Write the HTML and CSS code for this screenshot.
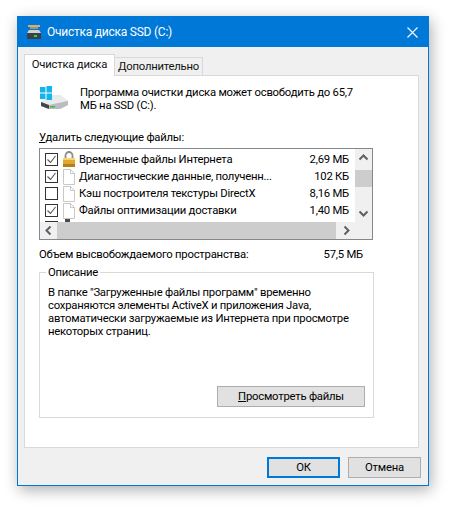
FILE: index.html
```html
<!DOCTYPE html>
<html lang="ru">
<head>
<meta charset="utf-8">
<title>Очистка диска SSD (C:)</title>
<link rel="stylesheet" href="styles.css">
</head>
<body>
<div class="window">
  <div class="titlebar">
    <svg class="title-icon" width="16" height="16" viewBox="0 0 16 16">
      <rect x="2" y="1" width="12" height="2" fill="#c9b27c"/>
      <rect x="4" y="3" width="8" height="2" fill="#a8935f"/>
      <path d="M3 6h10l2 3H1z" fill="#cfd3d6"/>
      <rect x="1" y="9" width="14" height="6" fill="#3b4148"/>
      <rect x="8" y="11" width="3" height="2" fill="#35d04a"/>
    </svg>
    <span class="title-text">Очистка диска SSD (C:)</span>
    <svg class="close" width="11" height="11" viewBox="0 0 11 11"><path d="M0.5 0.5l10 10M10.5 0.5l-10 10" stroke="#fff" stroke-width="1.1" fill="none"/></svg>
  </div>
  <div class="body">
    <div class="tabs">
      <div class="tab active">Очистка диска</div>
      <div class="tab">Дополнительно</div>
    </div>
    <div class="panel">
      <div class="intro">
        <svg class="drive" width="30" height="24" viewBox="0 0 30 24">
          <path d="M1 16L13 9h7l8 6v4l-8 4H8l-7-3z" fill="#d9dcdf"/>
          <path d="M1 16l8 3 19-4-8-6h-7z" fill="#e9ebec"/>
          <path d="M1 16l8 3v4l-8-3z" fill="#3f454b"/>
          <path d="M9 19l19-4v4l-8 4H9z" fill="#b9bdc1"/>
          <rect x="10" y="20" width="5" height="1.5" fill="#3fb54a"/>
          <rect x="0" y="1" width="5.5" height="5.5" fill="#14b4ec"/>
          <rect x="6.5" y="0" width="5.5" height="6.5" fill="#14b4ec"/>
          <rect x="0" y="7.5" width="5.5" height="5.5" fill="#14b4ec"/>
          <rect x="6.5" y="7.5" width="5.5" height="6.5" fill="#14b4ec"/>
        </svg>
        <p class="intro-text">Программа очистки диска может освободить до 65,7<br>МБ на SSD (C:).</p>
      </div>
      <div class="list-label"><u>У</u>далить следующие файлы:</div>
      <div class="listbox">
        <div class="list-top">
          <div class="rows">
            <div class="row">
              <span class="check on"><svg width="11" height="11" viewBox="0 0 11 11"><path d="M1.5 5.5l3 3 5-6.5" stroke="#555" stroke-width="1.1" fill="none"/></svg></span>
              <svg class="file" width="14" height="17" viewBox="0 0 14 17">
                <path d="M3.5 7V4.5a3.5 3.5 0 0 1 7 0V7" stroke="#8d8a80" stroke-width="1.8" fill="none"/>
                <rect x="1" y="7" width="12" height="9" fill="#e0a82e"/>
                <rect x="1" y="7" width="12" height="2" fill="#f5d475"/>
                <rect x="1" y="13" width="12" height="3" fill="#b97f17"/>
              </svg>
              <span class="name">Временные файлы Интернета</span><span class="size">2,69 МБ</span>
            </div>
            <div class="row">
              <span class="check on"><svg width="11" height="11" viewBox="0 0 11 11"><path d="M1.5 5.5l3 3 5-6.5" stroke="#555" stroke-width="1.1" fill="none"/></svg></span>
              <svg class="file" width="14" height="17" viewBox="0 0 14 17"><path d="M1.5 1.5h7l4 4v11h-11z M8.5 1.5v4h4" fill="#fff" stroke="#c9c9c9"/></svg>
              <span class="name">Диагностические данные, полученн...</span><span class="size">102 КБ</span>
            </div>
            <div class="row">
              <span class="check"></span>
              <svg class="file" width="14" height="17" viewBox="0 0 14 17"><path d="M1.5 1.5h7l4 4v11h-11z M8.5 1.5v4h4" fill="#fff" stroke="#c9c9c9"/></svg>
              <span class="name">Кэш построителя текстуры DirectX</span><span class="size">8,16 МБ</span>
            </div>
            <div class="row">
              <span class="check on"><svg width="11" height="11" viewBox="0 0 11 11"><path d="M1.5 5.5l3 3 5-6.5" stroke="#555" stroke-width="1.1" fill="none"/></svg></span>
              <svg class="file" width="14" height="17" viewBox="0 0 14 17"><path d="M1.5 1.5h7l4 4v11h-11z M8.5 1.5v4h4" fill="#fff" stroke="#c9c9c9"/></svg>
              <span class="name">Файлы оптимизации доставки</span><span class="size">1,40 МБ</span>
            </div>
            <div class="row">
              <span class="check"></span>
              <svg class="file" width="14" height="17" viewBox="0 0 14 17"><rect x="3" y="0" width="5" height="4" fill="#4a4a4a"/></svg>
            </div>
          </div>
          <div class="vscroll">
            <svg class="arrow" width="17" height="17" viewBox="0 0 17 17"><path d="M4.5 10.5l4-4 4 4" stroke="#606060" stroke-width="2" fill="none"/></svg>
            <div class="vtrack"><div class="vthumb"></div></div>
            <svg class="arrow" width="17" height="17" viewBox="0 0 17 17"><path d="M4.5 6.5l4 4 4-4" stroke="#606060" stroke-width="2" fill="none"/></svg>
          </div>
        </div>
        <div class="hscroll">
          <svg class="arrow" width="17" height="17" viewBox="0 0 17 17"><path d="M10.5 4.5l-4 4 4 4" stroke="#606060" stroke-width="2" fill="none"/></svg>
          <div class="hthumb"></div>
          <svg class="arrow" width="17" height="17" viewBox="0 0 17 17"><path d="M6.5 4.5l4 4-4 4" stroke="#606060" stroke-width="2" fill="none"/></svg>
          <div class="corner"></div>
        </div>
      </div>
      <div class="space"><span>Объем высвобождаемого пространства:</span><span>57,5 МБ</span></div>
      <fieldset class="desc">
        <legend>Описание</legend>
        <p>В папке "Загруженные файлы программ" временно<br>сохраняются элементы ActiveX и приложения Java,<br>автоматически загружаемые из Интернета при просмотре<br>некоторых страниц.</p>
        <div class="desc-actions"><button class="btn view"><u>П</u>росмотреть файлы</button></div>
      </fieldset>
    </div>
    <div class="footer">
      <button class="btn ok">ОК</button>
      <button class="btn cancel">Отмена</button>
    </div>
  </div>
</div>
</body>
</html>
```
FILE: styles.css
```css
* { box-sizing: border-box; }
html, body { margin: 0; padding: 0; background: #fff; }
body {
  width: 450px;
  height: 508px;
  overflow: hidden;
  font-family: Roboto, "Noto Sans", sans-serif;
  font-size: 11.3px;
  letter-spacing: -0.23px;
  line-height: 13px;
  color: #000;
}
.window {
  margin: 16px 0 0 17px;
  width: 412px;
  height: 470px;
  border: 1px solid #0078d7;
  background: #f0f0f0;
  display: flex;
  flex-direction: column;
  box-shadow: 2px 4px 14px rgba(0,0,0,0.32);
}
.titlebar {
  height: 30px;
  flex: none;
  background: #0078d7;
  color: #fff;
  display: flex;
  align-items: center;
  padding: 0 10px 0 8px;
}
.title-icon { margin-right: 5px; flex: none; }
.title-text { flex: 1; font-size: 12px; letter-spacing: -0.24px; }
.body { flex: 1; display: flex; flex-direction: column; padding: 7px 9px 0 6px; }
.tabs { display: flex; align-items: flex-end; height: 21px; position: relative; z-index: 1; }
.tab {
  height: 18px;
  width: 88px;
  border: 1px solid #d9d9d9;
  border-bottom: none;
  border-left: none;
  background: #f0f0f0;
  text-align: center;
  line-height: 18px;
  color: #111;
}
.tab.active {
  height: 22px;
  width: 91px;
  margin-bottom: -1px;
  background: #fff;
  border-left: 1px solid #d9d9d9;
  line-height: 20px;
}
.panel {
  width: 395px;
  height: 373px;
  background: #fff;
  border: 1px solid #d9d9d9;
  padding: 10px 14px 0 14px;
}
.intro { display: flex; height: 34px; margin-bottom: 11px; margin-left: 1px; }
.drive { flex: none; margin-right: 10px; }
.intro-text { margin: 0; padding-top: 1px; line-height: 12.5px; }
.list-label { height: 13px; margin-bottom: 4px; }
.listbox {
  width: 334px;
  height: 92px;
  border: 1px solid #828790;
  background: #fff;
  display: flex;
  flex-direction: column;
}
.list-top { display: flex; height: 73px; overflow: hidden; }
.rows { flex: 1; padding: 2px 0 0 5px; overflow: hidden; }
.row { display: flex; align-items: center; height: 17px; }
.check {
  flex: none;
  width: 13px;
  height: 13px;
  border: 1px solid #333;
  background: #fff;
  display: flex;
  align-items: center;
  justify-content: center;
  margin-right: 4px;
}
.file { flex: none; margin-right: 3px; }
.name { flex: 1; white-space: nowrap; }
.size { flex: none; margin-right: 6px; }
.vscroll { flex: none; width: 17px; background: #f0f0f0; display: flex; flex-direction: column; }
.vtrack { flex: 1; padding-top: 4px; }
.vthumb { height: 17px; background: #cdcdcd; }
.arrow { flex: none; display: block; }
.hscroll { flex: none; height: 17px; background: #f0f0f0; display: flex; }
.hthumb { width: 279px; background: #cdcdcd; }
.hscroll .arrow:nth-of-type(2) { margin-left: 2px; }
.corner { flex: 1; }
.space {
  display: flex;
  justify-content: space-between;
  width: 324px;
  margin-top: 8px;
  height: 13px;
}
.desc {
  margin: 5px 0 0 0;
  padding: 0 8px 10px;
  width: 335px;
  height: 152px;
  border: 1px solid #d9d9d9;
  display: flex;
  flex-direction: column;
}
.desc legend { padding: 0 2px; margin-left: -2px; line-height: 13px; }
.desc p { margin: 7px 0 0; line-height: 13px; }
.desc-actions { display: flex; justify-content: flex-end; margin-top: auto; }
.btn {
  font: inherit;
  letter-spacing: inherit;
  color: #000;
  background: #e1e1e1;
  border: 1px solid #adadad;
  padding: 0;
  height: 21px;
  line-height: 18px;
}
.view { width: 148px; }
.footer { display: flex; justify-content: flex-end; gap: 8px; margin-top: 9px; margin-right: -2px; }
.ok { width: 73px; border: 2px solid #0078d7; }
.cancel { width: 73px; }
```
